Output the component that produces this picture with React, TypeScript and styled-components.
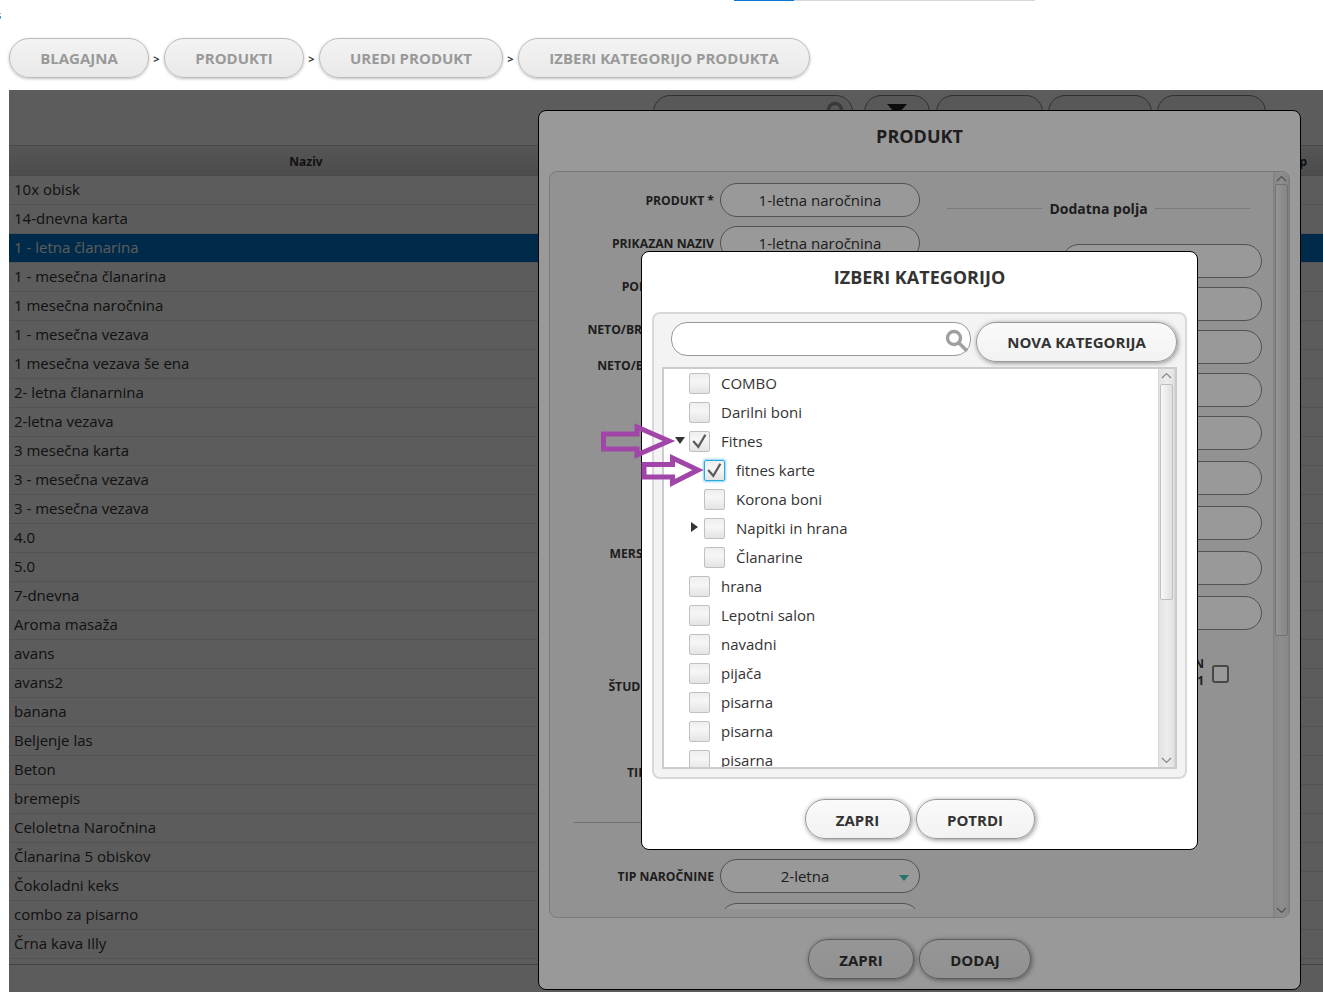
import React from "react";
import styled, { createGlobalStyle } from "styled-components";

const Global = createGlobalStyle`
  html, body { margin: 0; padding: 0; background: #fff; }
  body { font-family: "Open Sans", "Noto Sans", sans-serif; color: #333; }
  * { box-sizing: border-box; }
`;

const Page = styled.div`
  width: 1323px;
  height: 992px;
  overflow: hidden;
  display: flex;
  flex-direction: column;
`;

const TopBar = styled.div`
  height: 38px;
  display: flex;
  flex: none;
`;

const Stub = styled.div`
  width: 734px;
  overflow: hidden;
  font-size: 11px;
  line-height: 30px;
  height: 30px;
  text-indent: -4px;
  color: #222;
`;

const Progress = styled.div`
  width: 301px;
  height: 1px;
  background: linear-gradient(to right, #0a78d2 60px, #d8d8d8 60px);
`;

const Crumbs = styled.nav`
  display: flex;
  align-items: center;
  height: 40px;
  padding-left: 9px;
  flex: none;
`;

const Crumb = styled.div<{ $w: number }>`
  width: ${(p) => p.$w}px;
  height: 40px;
  border-radius: 20px;
  border: 1px solid #bbb;
  background: linear-gradient(#f3f3f3, #e9e9e9);
  box-shadow: 0 1px 3px rgba(0, 0, 0, 0.25);
  color: #999;
  font-weight: 700;
  font-size: 15px;
  display: flex;
  align-items: center;
  justify-content: center;
`;

const Sep = styled.span`
  width: 15px;
  text-align: center;
  font-size: 11px;
  font-weight: 700;
  color: #333;
`;

const Main = styled.main`
  position: relative;
  margin: 12px 0 0 9px;
  flex: 1;
  background: #fff;
  overflow: hidden;
`;

const Toolbar = styled.div`
  height: 56px;
  display: flex;
  gap: 5px;
  padding: 5px 0 0 644px;
  background: #fff;
  border-bottom: 1px solid #ccc;
  overflow: hidden;
`;

const ToolBtn = styled.div<{ $w: number; $mr?: number }>`
  flex: none;
  position: relative;
  width: ${(p) => p.$w}px;
  height: 36px;
  margin-right: ${(p) => p.$mr ?? 0}px;
  border: 1px solid #888;
  border-radius: 17px;
  background: #f5f5f5;
  display: flex;
  justify-content: flex-end;
  padding: 4px 1px;
`;

const FunnelBtn = styled(ToolBtn)`
  justify-content: center;
  padding: 8px 0 0;
`;

const TableHead = styled.div`
  display: flex;
  height: 30px;
  align-items: center;
  padding-top: 1px;
  background: linear-gradient(#eeeeee, #d4d4d4);
  font-size: 12px;
  font-weight: 700;
  color: #333;
  border-bottom: 1px solid #ccc;
`;

const HeadCell = styled.div`
  width: 594px;
  text-align: center;
`;

const HeadRest = styled.div`
  flex: 1;
  text-align: right;
  padding-right: 16px;
`;

const TableRow = styled.div<{ $sel?: boolean }>`
  height: 29px;
  padding: 0 0 2px 5px;
  display: flex;
  align-items: center;
  font-size: 15px;
  background: ${(p) => (p.$sel ? "#0077cc" : "#ffffff")};
  color: ${(p) => (p.$sel ? "#ffffff" : "#333")};
  border-bottom: 1px solid #e6e6e6;
`;

const TableFoot = styled.div`
  height: 6px;
  background: #fff;
  border-bottom: 1px solid #bbb;
`;

const Dim = styled.div`
  position: absolute;
  inset: 0;
  background: rgba(0, 0, 0, 0.4);
`;

const Dialog = styled.section<{ $l: number; $t: number; $w: number; $h: number }>`
  position: absolute;
  left: ${(p) => p.$l}px;
  top: ${(p) => p.$t}px;
  width: ${(p) => p.$w}px;
  height: ${(p) => p.$h}px;
  background: #fff;
  border: 1px solid #000;
  border-radius: 8px;
  display: flex;
  flex-direction: column;
`;

const DialogTitle = styled.h2<{ $h: number }>`
  margin: 0;
  height: ${(p) => p.$h}px;
  flex: none;
  font-size: 18px;
  font-weight: 700;
  color: #333;
  text-align: center;
  line-height: 50px;
`;

const Panel = styled.div`
  margin: 0 10px 0 10px;
  height: 747px;
  border: 1px solid #ccc;
  border-radius: 8px;
  background: #f3f3f3;
  display: flex;
  overflow: hidden;
`;

const FormArea = styled.div`
  flex: 1;
  height: 737px;
  overflow: hidden;
  display: flex;
`;

const LeftCol = styled.div`
  width: 370px;
  flex: none;
  padding-top: 11px;
`;

const FormRow = styled.div<{ $mt?: number }>`
  display: flex;
  align-items: center;
  gap: 6px;
  height: 34px;
  margin-top: ${(p) => p.$mt ?? 0}px;
`;

const FieldLabel = styled.label`
  width: 164px;
  flex: none;
  display: flex;
  justify-content: flex-end;
  font-size: 12.2px;
  font-weight: 700;
  color: #333;
  white-space: nowrap;
`;

const Field = styled.div<{ $select?: boolean }>`
  position: relative;
  width: 200px;
  height: 34px;
  border: 1px solid #888;
  border-radius: 17px;
  background: #fff;
  font-size: 15px;
  color: #333;
  display: flex;
  align-items: center;
  justify-content: center;
  padding-right: ${(p) => (p.$select ? "30px" : "0")};
`;

const Caret = styled.span`
  position: absolute;
  right: 10px;
  top: 15px;
  width: 0;
  height: 0;
  border-left: 5px solid transparent;
  border-right: 5px solid transparent;
  border-top: 6px solid #3fc4b4;
`;

const Rule = styled.div`
  width: 346px;
  height: 1px;
  margin: 33px 0 0 24px;
  background: #bbb;
`;

const RightCol = styled.div`
  flex: 1;
  padding-top: 27px;
`;

const LegendRow = styled.div`
  display: flex;
  align-items: center;
  gap: 7px;
  margin-left: 27px;
  width: 303px;
  height: 18px;
  font-size: 14px;
  font-weight: 700;
  color: #333;
  &::before,
  &::after {
    content: "";
    flex: 1;
    height: 1px;
    background: #ccc;
  }
`;

const RightField = styled(Field)<{ $mt: number }>`
  margin: ${(p) => p.$mt}px 0 0 142px;
`;

const CheckRow = styled.div`
  display: flex;
  justify-content: flex-end;
  align-items: center;
  gap: 8px;
  margin-top: 25px;
  width: 309px;
  height: 36px;
`;

const CheckText = styled.div`
  text-align: right;
  font-size: 12px;
  font-weight: 700;
  line-height: 17px;
  margin-top: -2px;
  color: #333;
`;

const PlainBox = styled.div`
  width: 17px;
  height: 18px;
  border: 2px solid #777;
  border-radius: 3px;
  background: #fff;
  margin-top: 1px;
`;

const Scroll = styled.div<{ $w: number }>`
  flex: none;
  width: ${(p) => p.$w}px;
  background: linear-gradient(to right, #e2e2e2, #ececec, #e2e2e2);
  border-left: 1px solid #d8d8d8;
  border-right: 1px solid #d8d8d8;
  display: flex;
  flex-direction: column;
  align-items: center;
  padding: 3px 0;
  position: relative;
`;

const Thumb = styled.div<{ $h: number; $mt: number }>`
  width: 13px;
  height: ${(p) => p.$h}px;
  margin-top: ${(p) => p.$mt}px;
  border: 1px solid #c0c0c0;
  border-radius: 2px;
  background: linear-gradient(to right, #f8f8f8, #e0e0e0);
`;

const ScrollGap = styled.div`
  flex: 1;
`;

const Actions = styled.div<{ $pt: number }>`
  display: flex;
  justify-content: center;
  gap: 5px;
  padding-top: ${(p) => p.$pt}px;
`;

const PillBtn = styled.button<{ $w: number }>`
  width: ${(p) => p.$w}px;
  height: 40px;
  border: 1px solid #999;
  border-radius: 20px;
  background: linear-gradient(#fafafa, #f2f2f2);
  box-shadow: 1px 1px 5px rgba(0, 0, 0, 0.45);
  font-family: inherit;
  font-size: 15px;
  font-weight: 700;
  color: #333;
  padding: 0;
`;

const ActionBtn = styled(PillBtn)`
  padding-top: 2px;
`;

const CatPanel = styled.div`
  margin: 0 10px;
  height: 467px;
  border: 2px solid #d8d8d8;
  border-radius: 8px;
  background: #f3f3f3;
  padding: 8px;
  display: flex;
  flex-direction: column;
`;

const SearchRow = styled.div`
  display: flex;
  align-items: flex-start;
  gap: 5px;
  height: 45px;
  padding-left: 9px;
  flex: none;
`;

const SearchBox = styled.div`
  width: 300px;
  height: 34px;
  border: 1px solid #999;
  border-radius: 16px;
  background: #fff;
  display: flex;
  align-items: center;
  justify-content: flex-end;
  padding: 4px 0 0 0;
`;

const TreeBox = styled.div`
  flex: none;
  width: 515px;
  height: 402px;
  border: 2px solid #ccc;
  background: #fff;
  display: flex;
  overflow: hidden;
`;

const TreeList = styled.div`
  flex: 1;
  overflow: hidden;
`;

const TreeRow = styled.div<{ $indent: number }>`
  height: 29px;
  display: flex;
  align-items: center;
  gap: 11px;
  padding-left: ${(p) => 25 + p.$indent * 15}px;
  font-size: 15px;
  color: #333;
  position: relative;
`;

const TreeLabel = styled.span`
  margin-top: -2px;
`;

const Toggle = styled.span<{ $open?: boolean }>`
  position: absolute;
  width: 0;
  height: 0;
  margin-top: -3px;
  ${(p) =>
    p.$open
      ? `border-left:5px solid transparent;border-right:5px solid transparent;border-top:7px solid #333;margin-left:-14px;`
      : `border-top:5px solid transparent;border-bottom:5px solid transparent;border-left:7px solid #333;margin-left:-13px;`}
`;

const Box = styled.span<{ $focus?: boolean }>`
  flex: none;
  width: 21px;
  height: 21px;
  border-radius: 2px;
  border: 1px solid ${(p) => (p.$focus ? "#2aa8e0" : "#c0c0c0")};
  box-shadow: ${(p) => (p.$focus ? "0 0 2px 1px rgba(60,180,240,.6)" : "none")};
  background: linear-gradient(#eeeeee, #f6f6f6 40%, #e4e4e4);
  display: flex;
  align-items: center;
  justify-content: center;
`;

const Annotation = styled.svg`
  position: absolute;
  left: 0;
  top: 0;
  pointer-events: none;
`;

const names = [
  "10x obisk", "14-dnevna karta", "1 - letna članarina", "1 - mesečna članarina",
  "1 mesečna naročnina", "1 - mesečna vezava", "1 mesečna vezava še ena", "2- letna članarnina",
  "2-letna vezava", "3 mesečna karta", "3 - mesečna vezava", "3 - mesečna vezava", "4.0", "5.0",
  "7-dnevna", "Aroma masaža", "avans", "avans2", "banana", "Beljenje las", "Beton", "bremepis",
  "Celoletna Naročnina", "Članarina 5 obiskov", "Čokoladni keks", "combo za pisarno", "Črna kava Illy",
];

type Node = { t: string; i: number; c?: boolean; f?: boolean; o?: "open" | "closed" };
const tree: Node[] = [
  { t: "COMBO", i: 0 }, { t: "Darilni boni", i: 0 },
  { t: "Fitnes", i: 0, c: true, o: "open" },
  { t: "fitnes karte", i: 1, c: true, f: true },
  { t: "Korona boni", i: 1 }, { t: "Napitki in hrana", i: 1, o: "closed" }, { t: "Članarine", i: 1 },
  { t: "hrana", i: 0 }, { t: "Lepotni salon", i: 0 }, { t: "navadni", i: 0 }, { t: "pijača", i: 0 },
  { t: "pisarna", i: 0 }, { t: "pisarna", i: 0 }, { t: "pisarna", i: 0 },
];

const Check = () => (
  <svg width="21" height="21" viewBox="0 0 21 21" fill="none">
    <path d="M3.5 10 L9.2 16.5 L17 3" stroke="#5a5a5a" strokeWidth="2.5" />
  </svg>
);

const Chevron = ({ up }: { up?: boolean }) => (
  <svg width="11" height="7" viewBox="0 0 11 7" fill="none">
    <path d={up ? "M1 6 L5.5 1.5 L10 6" : "M1 1 L5.5 5.5 L10 1"} stroke="#888" strokeWidth="1.2" />
  </svg>
);

const SearchIcon = () => (
  <svg width="26" height="26" viewBox="0 0 26 26" fill="none">
    <circle cx="10" cy="10" r="6.5" stroke="#a0a0a0" strokeWidth="3.4" />
    <path d="M15 15 L23 23" stroke="#a0a0a0" strokeWidth="3.6" />
  </svg>
);

const ScrollBar = ({ thumb, w, mt }: { thumb: number; w: number; mt: number }) => (
  <Scroll $w={w}>
    <Chevron up />
    <Thumb $h={thumb} $mt={mt} />
    <ScrollGap />
    <Chevron />
  </Scroll>
);

const leftRows: { l: string; v?: string; mt: number }[] = [
  { l: "PRODUKT *", v: "1-letna naročnina", mt: 0 },
  { l: "PRIKAZAN NAZIV", v: "1-letna naročnina", mt: 9 },
  { l: "POPUST CENE *", mt: 9 },
  { l: "NETO/BRUTO CENA *", mt: 9 },
  { l: "NETO/BRUTO CENA", mt: 2 },
  { l: "MERSKA ENOTA *", mt: 154 },
  { l: "ŠTUDENTSKI BON", mt: 99 },
  { l: "TIP PREHRANE", mt: 52 },
];

const rightGaps = [27, 9, 9, 9, 9, 11, 11, 11, 11];

export default function App() {
  return (
    <Page>
      <Global />
      <TopBar>
        <Stub>s</Stub>
        <Progress />
      </TopBar>
      <Crumbs>
        <Crumb $w={140}>BLAGAJNA</Crumb>
        <Sep>&gt;</Sep>
        <Crumb $w={140}>PRODUKTI</Crumb>
        <Sep>&gt;</Sep>
        <Crumb $w={184}>UREDI PRODUKT</Crumb>
        <Sep>&gt;</Sep>
        <Crumb $w={292}>IZBERI KATEGORIJO PRODUKTA</Crumb>
      </Crumbs>
      <Main>
        <Toolbar>
          <ToolBtn $w={200} $mr={6}>
            <SearchIcon />
          </ToolBtn>
          <FunnelBtn $w={66} $mr={1}>
            <svg width="20" height="16" viewBox="0 0 20 16">
              <path d="M0 0 H20 L12 9 V16 H8 V9 Z" fill="#222" />
            </svg>
          </FunnelBtn>
          <ToolBtn $w={107} />
          <ToolBtn $w={104} />
          <ToolBtn $w={109} />
        </Toolbar>
        <TableHead>
          <HeadCell>Naziv</HeadCell>
          <HeadRest>Tip</HeadRest>
        </TableHead>
        {names.map((n, i) => (
          <TableRow key={i} $sel={i === 2}>
            {n}
          </TableRow>
        ))}
        <TableFoot />
        <Dim />
        <Dialog $l={529} $t={20} $w={763} $h={880}>
          <DialogTitle $h={60}>PRODUKT</DialogTitle>
          <Panel>
            <FormArea>
              <LeftCol>
                {leftRows.map((r) => (
                  <FormRow key={r.l} $mt={r.mt}>
                    <FieldLabel>{r.l}</FieldLabel>
                    <Field>{r.v}</Field>
                  </FormRow>
                ))}
                <Rule />
                <FormRow $mt={36}>
                  <FieldLabel>TIP NAROČNINE</FieldLabel>
                  <Field $select>
                    2-letna
                    <Caret />
                  </Field>
                </FormRow>
                <FormRow $mt={10}>
                  <FieldLabel />
                  <Field />
                </FormRow>
              </LeftCol>
              <RightCol>
                <LegendRow>Dodatna polja</LegendRow>
                {rightGaps.map((g, i) => (
                  <RightField key={i} $mt={g} />
                ))}
                <CheckRow>
                  <CheckText>
                    AKTIVEN
                    <br />
                    V1
                  </CheckText>
                  <PlainBox />
                </CheckRow>
              </RightCol>
            </FormArea>
            <ScrollBar thumb={452} w={16} mt={2} />
          </Panel>
          <Actions $pt={21}>
            <ActionBtn $w={106}>ZAPRI</ActionBtn>
            <ActionBtn $w={112}>DODAJ</ActionBtn>
          </Actions>
        </Dialog>
        <Dim />
        <Dialog $l={632} $t={161} $w={557} $h={599}>
          <DialogTitle $h={60}>IZBERI KATEGORIJO</DialogTitle>
          <CatPanel>
            <SearchRow>
              <SearchBox>
                <SearchIcon />
              </SearchBox>
              <PillBtn $w={201}>NOVA KATEGORIJA</PillBtn>
            </SearchRow>
            <TreeBox>
              <TreeList>
                {tree.map((n, i) => (
                  <TreeRow key={i} $indent={n.i}>
                    {n.o && <Toggle $open={n.o === "open"} />}
                    <Box $focus={n.f}>{n.c && <Check />}</Box>
                    <TreeLabel>{n.t}</TreeLabel>
                  </TreeRow>
                ))}
              </TreeList>
              <ScrollBar thumb={216} w={17} mt={5} />
            </TreeBox>
          </CatPanel>
          <Actions $pt={20}>
            <ActionBtn $w={106}>ZAPRI</ActionBtn>
            <ActionBtn $w={119}>POTRDI</ActionBtn>
          </Actions>
        </Dialog>
        <Annotation width="720" height="420" viewBox="0 0 720 420">
          <path
            d="M594.5 344 H628 V337 L660 351 L628 365 V359 H594.5 Z"
            fill="none"
            stroke="#a145a8"
            strokeWidth="5"
          />
          <path
            d="M635 374.5 H663.5 V368 L689 380 L663.5 393 V387 H635 Z"
            fill="none"
            stroke="#a145a8"
            strokeWidth="5"
          />
        </Annotation>
      </Main>
    </Page>
  );
}
